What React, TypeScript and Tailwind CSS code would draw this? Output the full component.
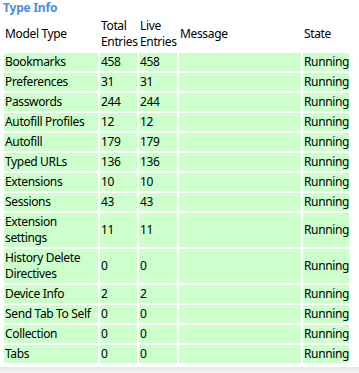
import React from "react";

type Row = { name: React.ReactNode; total: string; live: string };

const rows: Row[] = [
  { name: "Bookmarks", total: "458", live: "458" },
  { name: "Preferences", total: "31", live: "31" },
  { name: "Passwords", total: "244", live: "244" },
  { name: "Autofill Profiles", total: "12", live: "12" },
  { name: "Autofill", total: "179", live: "179" },
  { name: "Typed URLs", total: "136", live: "136" },
  { name: "Extensions", total: "10", live: "10" },
  { name: "Sessions", total: "43", live: "43" },
  { name: "Extension settings", total: "11", live: "11" },
  { name: "History Delete Directives", total: "0", live: "0" },
  { name: "Device Info", total: "2", live: "2" },
  { name: "Send Tab To Self", total: "0", live: "0" },
  { name: "Collection", total: "0", live: "0" },
  { name: "Tabs", total: "0", live: "0" },
];

export default function App() {
  const td = "bg-[#ccffcc] px-[1px] py-[1px] align-middle text-left font-normal";
  return (
    <div
      className="w-[359px] h-[373px] bg-white text-black text-[12px] leading-[16px] tracking-[-0.35px] overflow-hidden"
      style={{ fontFamily: '"Segoe UI", "Noto Sans", sans-serif' }}
    >
      <div className="pl-[3px] h-[15px] font-bold text-[#4a8ee6] leading-[16px] tracking-[-0.2px]">Type Info</div>
      <table className="ml-[2px] w-[349px] table-fixed border-separate border-spacing-[2px]">
        <thead>
          <tr>
            <th className="w-[94px] px-[1px] py-[1px] align-middle text-left font-normal">Model Type</th>
            <th className="w-[37px] px-[1px] py-[1px] align-middle text-left font-normal whitespace-nowrap">
              Total
              <br />
              Entries
            </th>
            <th className="w-[38px] px-[1px] py-[1px] align-middle text-left font-normal whitespace-nowrap">
              Live
              <br />
              Entries
            </th>
            <th className="w-[122px] px-[1px] py-[1px] align-middle text-left font-normal">Message</th>
            <th className="w-[46px] px-[1px] py-[1px] align-middle text-left font-normal">State</th>
          </tr>
        </thead>
        <tbody>
          {rows.map((r, i) => (
            <tr key={i}>
              <td className={td}>{r.name}</td>
              <td className={td}>{r.total}</td>
              <td className={td}>{r.live}</td>
              <td className={td}></td>
              <td className={td + " whitespace-nowrap"}>Running</td>
            </tr>
          ))}
        </tbody>
      </table>
      <div className="mt-[2px] h-[6px] bg-gradient-to-b from-[#e8e8e8] to-[#f4f4f4]" />
    </div>
  );
}
